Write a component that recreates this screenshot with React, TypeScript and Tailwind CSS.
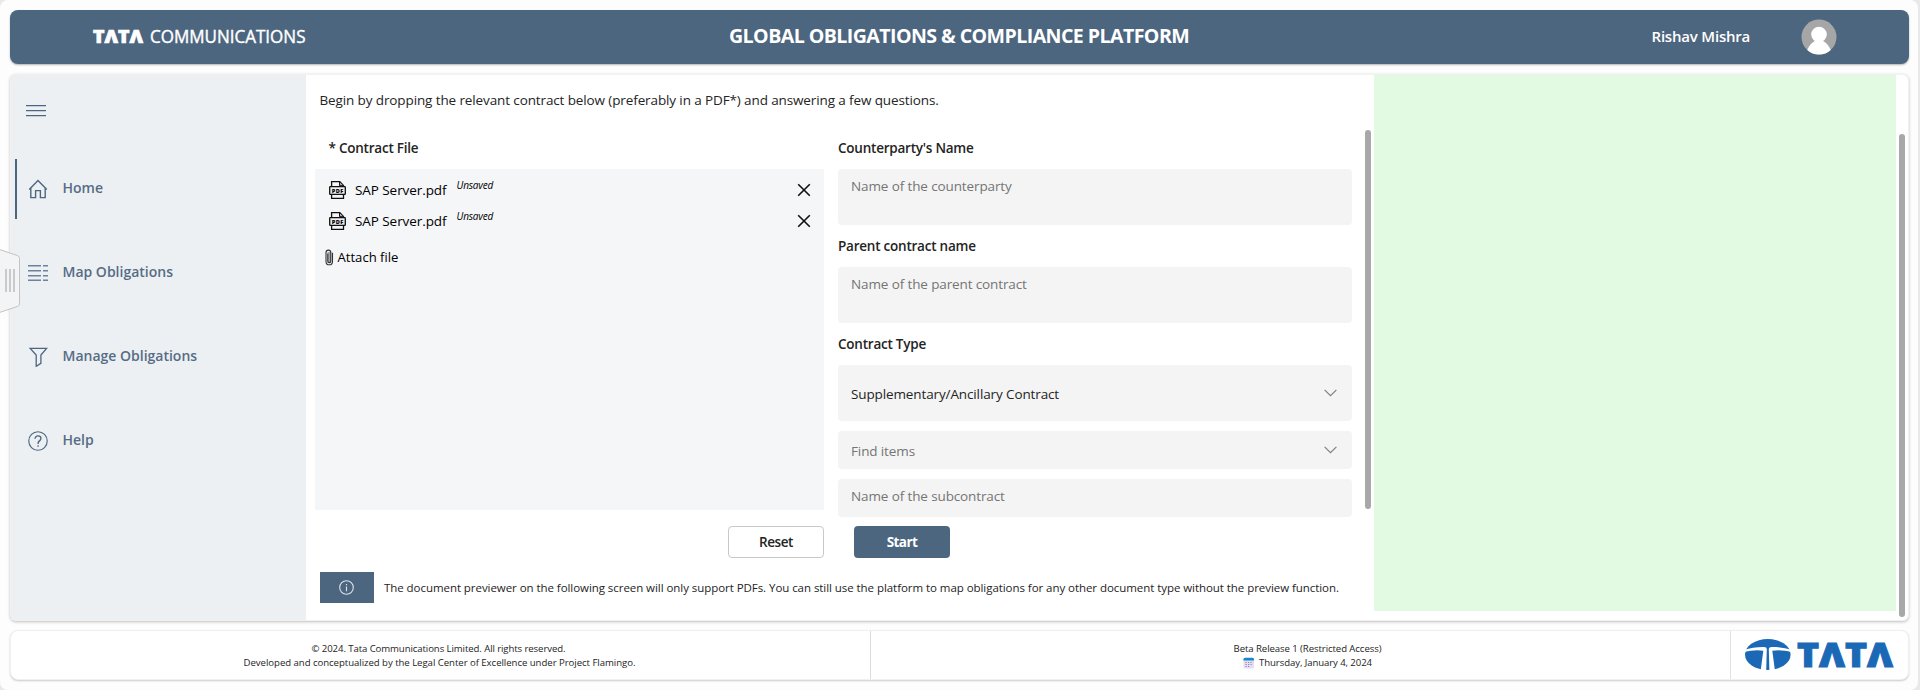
import React from "react";

function HomeIcon() {
  return (
    <svg width="20" height="20" viewBox="0 0 20 20" fill="none" stroke="#4d6680" strokeWidth="1.4">
      <path d="M1.2 10.6 10 1.6l8.8 9M2.8 9.2v9.4h4.8v-7h4.8v7h4.8V9.2" />
    </svg>
  );
}

function MapIcon() {
  return (
    <svg width="20" height="20" viewBox="0 0 20 20" fill="none" stroke="#6c839d" strokeWidth="1.6">
      <path d="M0 2.8h13M15 2.8h5M0 7.8h13M15 7.8h5M0 12.8h13M15 12.8h5M0 17.2h13M15 17.2h5" />
    </svg>
  );
}

function FilterIcon() {
  return (
    <svg width="20" height="20" viewBox="0 0 20 20" fill="none" stroke="#4d6680" strokeWidth="1.3">
      <path d="M2.2 1.4h16.4l-5.7 6.6v8.3l-4.7 3V8z" />
    </svg>
  );
}

function HelpIcon() {
  return (
    <svg width="20" height="20" viewBox="0 0 21 21" fill="none" stroke="#4d6680" strokeWidth="1.2">
      <circle cx="10.5" cy="10.5" r="9.7" />
      <path d="M7.4 8.2c0-1.9 1.3-3 3.1-3s3.1 1.1 3.1 2.8c0 2.2-3 2.5-3 4.6v1M10.6 15v1.6" strokeWidth="1.4" />
    </svg>
  );
}

function PdfIcon() {
  return (
    <svg width="17" height="18" viewBox="0 0 17 18" fill="none" stroke="#111" strokeWidth="1.3">
      <path d="M2.6 5.500V.7h8.200l3.700 3.700v1.100" />
      <path d="M10.500 1v3.700h3.800" fill="#aaa" strokeWidth="1" />
      <rect x=".7" y="5.600" width="15.600" height="7.800" rx=".6" fill="#eeeef0" />
      <path d="M2.600 13.500v3.800h11.900v-3.800" />
      <text x="8.500" y="11.600" fontSize="5.600" textLength="11.500" lengthAdjust="spacing" fontWeight="800" fontFamily="Open Sans, sans-serif" textAnchor="middle" fill="#000" stroke="none">
        PDF
      </text>
    </svg>
  );
}

function ClipIcon() {
  return (
    <svg width="9" height="17" viewBox="0 0 9 17" fill="none" stroke="#333" strokeWidth="1.1">
      <rect x="2.6" y="3" width="3.6" height="11" fill="#a5a5a5" stroke="none" />
      <path d="M2.8 4.5v7.6c0 2.2 3 2.2 3 0V3.6C5.8.3 1 .3 1 3.6v8.8c0 4.500 6.500 4.500 6.500 0V3.800" />
    </svg>
  );
}

function Chevron() {
  return (
    <svg className="mr-0.5" width="13" height="8" viewBox="0 0 13 8" fill="none" stroke="#808080" strokeWidth="1.2">
      <path d="m.6.8 5.900 5.900L12.400.8" />
    </svg>
  );
}

function FileRow() {
  return (
    <div className="flex h-[31px] items-center pl-3.5 pr-[13px] text-[13.5px] text-black">
      <PdfIcon />
      <span className="ml-[9px] leading-5 tracking-[-0.07px]">SAP Server.pdf</span>
      <span className="mb-[10px] ml-[10px] text-[10px] italic leading-4 tracking-[-0.2px]">Unsaved</span>
      <svg className="ml-auto" width="14" height="14" viewBox="0 0 14 14" stroke="#111" strokeWidth="1.600">
        <path d="m1.200 1.200 11.600 11.600M12.800 1.200 1.200 12.800" />
      </svg>
    </div>
  );
}

function Label({ children }: { children: React.ReactNode }) {
  return <div className="mt-[11px] mb-[11px] h-5 text-[13.5px] font-semibold leading-5 tracking-[-0.23px] text-[#242424]">{children}</div>;
}

const nav = [
  { label: "Home", icon: <HomeIcon />, active: true },
  { label: "Map Obligations", icon: <MapIcon />, active: false },
  { label: "Manage Obligations", icon: <FilterIcon />, active: false },
  { label: "Help", icon: <HelpIcon />, active: false },
];

function Sidebar() {
  return (
    <nav className="w-[295px] shrink-0 bg-[#ecf0f3] pt-[30px]">
      <div className="ml-[15px] flex h-[11px] w-5 flex-col justify-between">
        <div className="h-px bg-[#4d6680] shadow-[0_1px_0_#c3cfdb]" />
        <div className="h-px bg-[#4d6680] shadow-[0_1px_0_#c3cfdb]" />
        <div className="h-px bg-[#4d6680] shadow-[0_1px_0_#c3cfdb]" />
      </div>
      <div className="mt-[43px] flex flex-col gap-6">
        {nav.map((n) => (
          <div key={n.label} className="flex h-[60px] items-center pl-1">
            <div className={n.active ? "h-full w-0.5 bg-[#4d6680]" : "h-full w-0.5"} />
            <div className="ml-[11px] flex w-5 justify-center">{n.icon}</div>
            <span className="mb-0.5 ml-[14.5px] text-sm font-semibold text-[#566c85]">{n.label}</span>
          </div>
        ))}
      </div>
    </nav>
  );
}

function Form() {
  return (
    <main className="flex w-[1068px] shrink-0 flex-col pt-[15px] text-[#242424]">
      <p className="ml-[13.5px] h-5 text-[13.5px] leading-5 tracking-[-0.117px]">
        Begin by dropping the relevant contract below (preferably in a PDF*) and answering a few questions.
      </p>
      <div className="mt-[17px] flex">
        <section className="ml-[9px] w-[509px]">
          <div className="ml-[13.5px]">
            <Label>* Contract File</Label>
          </div>
          <div className="h-[341px] bg-[#f5f6f8] pt-[5px]">
            <FileRow />
            <FileRow />
            <div className="mt-[11px] flex h-5 items-center pl-2.5 text-[13.100px] text-black">
              <ClipIcon />
              <span className="ml-[3.5px] leading-5">Attach file</span>
            </div>
          </div>
        </section>
        <section className="ml-3.5 w-[514px] text-[13.5px] leading-5 tracking-[-0.12px] text-[#757575]">
          <Label>Counterparty's Name</Label>
          <div className="h-14 rounded bg-[#f4f4f4] px-[13px] pt-[7px]">Name of the counterparty</div>
          <Label>Parent contract name</Label>
          <div className="h-14 rounded bg-[#f4f4f4] px-[13px] pt-[7px]">Name of the parent contract</div>
          <Label>Contract Type</Label>
          <div className="flex h-14 items-center justify-between rounded bg-[#f4f4f4] px-[13px] text-[#242424]">
            <span className="pt-0.5">Supplementary/Ancillary Contract</span>
            <Chevron />
          </div>
          <div className="mt-2.5 flex h-[38px] items-center justify-between rounded bg-[#f4f4f4] px-[13px]">
            <span className="pt-px">Find items</span>
            <Chevron />
          </div>
          <div className="mt-2.5 h-[38px] rounded bg-[#f4f4f4] px-[13px] pt-[7px]">Name of the subcontract</div>
        </section>
        <div className="ml-[13px] mt-[3px] h-[379px] w-1.5 rounded-full bg-[#a8a8a8]" />
      </div>
      <div className="mt-[9px] flex h-8 text-[13.5px]">
        <button className="ml-[422px] w-24 rounded border border-[#c9c9c9] bg-white pt-px font-semibold tracking-[-0.4px] text-[#242424]">Reset</button>
        <button className="ml-[30px] w-24 rounded bg-[#4d6680] pt-px font-bold tracking-[-0.55px] text-white">Start</button>
      </div>
      <div className="mt-3.5 ml-[14px] flex h-[31px] items-center">
        <div className="flex h-full w-[54px] items-center justify-center bg-[#4d6680] pr-0.5">
          <svg width="15" height="15" viewBox="0 0 15 15" fill="none" stroke="#dde4eb" strokeWidth="1.100">
            <circle cx="7.500" cy="7.500" r="6.800" />
            <path d="M7.500 6.500v4.700M7.500 4v1.300" />
          </svg>
        </div>
        <span className="ml-2.5 whitespace-nowrap text-[11.5px] leading-5 tracking-[-0.056px]">
          The document previewer on the following screen will only support PDFs. You can still use the platform to map obligations for any other document type without the preview function.
        </span>
      </div>
    </main>
  );
}

function TataLogo() {
  return (
    <svg className="overflow-visible" width="156" height="34" viewBox="0 0 156 34" aria-label="TATA">
      <ellipse cx="22.800" cy="15.500" rx="22.800" ry="15.500" fill="#1b69b6" />
      <path d="M-1 11C5 8.800 12 7.900 19 8q2.700.1 2.800 2L21.200 32h-5.600L18.300 11.800C12 10.700 6 11.400-1 13.200z" fill="#fff" />
      <path d="M46.600 11C40.600 8.800 33.600 7.900 26.600 8q-2.700.1-2.800 2l.6 22H30L27.300 11.800c6.300-1.100 12.300-.4 19.300 1.400z" fill="#fff" />
      <text x="52" y="27.500" textLength="96" lengthAdjust="spacingAndGlyphs" fontFamily="Open Sans, sans-serif" fontWeight="800" fontSize="34" fill="#1b69b6" stroke="#1b69b6" strokeWidth="1">
        TΛTΛ
      </text>
    </svg>
  );
}

export default function App() {
  return (
    <div className="relative h-[690px] w-[1920px] overflow-hidden bg-[#e9e9e9] font-['Open_Sans',sans-serif]">
      <div className="flex h-full w-[1918px] flex-col rounded-lg bg-[#fdfdfd] px-2.5 pt-2.5">
        <header className="flex h-[54px] w-[1899px] items-center rounded-lg bg-[#4d6680] text-white shadow-[0_1px_2px_rgba(0,0,0,0.3)]">
          <svg className="ml-[78px] overflow-visible" width="225" height="34" viewBox="0 0 225 34" fill="#fff" fontFamily="Open Sans, sans-serif">
            <text x="5" y="23" textLength="50" lengthAdjust="spacingAndGlyphs" fontWeight="800" fontSize="18" stroke="#fff" strokeWidth=".7">TΛTΛ</text>
            <text x="62" y="23" textLength="155.500" lengthAdjust="spacingAndGlyphs" fontWeight="400" fontSize="17.500" stroke="#fff" strokeWidth=".4">COMMUNICATIONS</text>
          </svg>
          <h1 className="mb-0.5 ml-[416px] w-[462px] whitespace-nowrap text-[19.600px] font-bold tracking-[-0.575px]">GLOBAL OBLIGATIONS &amp; COMPLIANCE PLATFORM</h1>
          <span className="mb-px ml-[460.500px] w-[100px] whitespace-nowrap text-[15px] font-semibold tracking-[-0.2px]">Rishav Mishra</span>
          <svg className="ml-[49.500px]" width="36" height="36" viewBox="0 0 36 36">
            <circle cx="18" cy="18" r="17.500" fill="#a6a6a6" />
            <circle cx="18" cy="15.500" r="7.800" fill="#fff" />
            <path d="M6.200 31c2-5 5.300-8.200 8.300-9.300h7c3 1.100 6.300 4.300 8.300 9.300A17.500 17.500 0 0 1 18 35.500 17.500 17.500 0 0 1 6.200 31z" fill="#fff" />
          </svg>
        </header>
        <div className="mt-2.5 flex h-[547px] w-[1899px] rounded-md border border-[#f1f1f1] bg-white shadow-[0_1px_3px_rgba(0,0,0,0.25)]">
          <Sidebar />
          <Form />
          <div className="h-[536px] w-[522px] bg-[#e1fae1]" />
          <div className="ml-[3px] mt-[59px] h-[483px] w-1.5 rounded-full bg-[#a8a8a8]" />
        </div>
        <footer className="mt-[9px] flex h-[50px] w-[1899px] rounded-lg border border-[#f0f0f0] bg-white text-[9.600px] leading-[14px] text-[#242424] shadow-[0_1px_2px_rgba(0,0,0,0.2)]">
          <div className="flex w-[860px] flex-col items-center border-r border-[#dcdcdc] pr-0.5 pt-[11px]">
            <div className="pr-0.5 tracking-[-0.09px]">© 2024. Tata Communications Limited. All rights reserved.</div>
            <div className="tracking-[-0.043px]">Developed and conceptualized by the Legal Center of Excellence under Project Flamingo.</div>
          </div>
          <div className="flex w-[860px] flex-col items-center border-r border-[#e2e2e2] pl-[14px] pt-[11px]">
            <div className="tracking-[-0.08px]">Beta Release 1 (Restricted Access)</div>
            <div className="flex items-center gap-1 tracking-[-0.09px]">
              <svg width="12" height="12" viewBox="0 0 12 12">
                <rect x=".5" y="1" width="10.500" height="10.500" rx="1.500" fill="#e6def0" />
                <path d="M.5 3.500V2.200Q.5.700 2 .7h7.500Q11 .7 11 2.200v1.300z" fill="#1686cf" />
                <path d="M2.500 5.500h7M2.500 7.500h7M2.500 9.500h5" stroke="#7c7fb5" strokeWidth=".9" strokeDasharray="1.200 1.300" />
              </svg>
              <span>Thursday, January 4, 2024</span>
            </div>
          </div>
          <div className="flex pl-[14px] pt-2">
            <TataLogo />
          </div>
        </footer>
      </div>
      <svg className="absolute left-0 top-[248px]" width="21" height="66" viewBox="0 0 21 66" fill="none">
        <path d="M-1 1.300 17.500 7.600q2 .7 2 2.700v45.400q0 2-2 2.700L-1 64.700z" fill="#f3f4f5" stroke="#c3c3c3" />
        <path d="M6 21v23M10 21v23M14 21v23" stroke="#c6c6c6" strokeWidth="1.800" />
      </svg>
    </div>
  );
}
